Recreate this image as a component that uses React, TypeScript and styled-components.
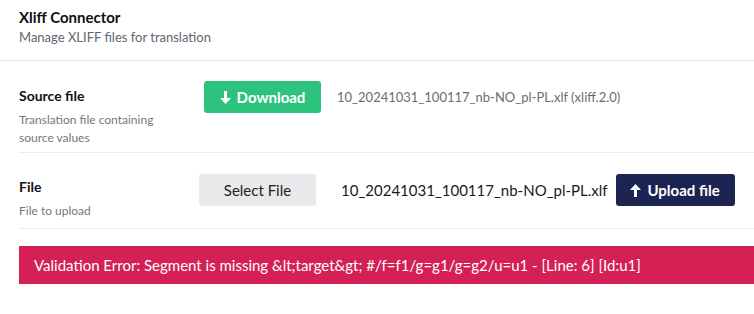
import React from "react";
import styled, { createGlobalStyle } from "styled-components";

const Global = createGlobalStyle`
  html, body { margin: 0; padding: 0; background: #fff; }
  body { font-family: Lato, "Open Sans", sans-serif; color: #1a1a1a; }
  * { box-sizing: border-box; }
`;

const Page = styled.div`
  width: 754px;
  overflow: hidden;
`;

const Header = styled.header`
  padding: 7px 19px 0 19px;
  height: 61px;
  border-bottom: 1px solid #e6e6e6;
`;

const Title = styled.h1`
  margin: 0;
  font-size: 15px;
  font-weight: 700;
  line-height: 20px;
  color: #111;
`;

const Subtitle = styled.p`
  margin: 1px 0 0;
  font-size: 13px;
  line-height: 18px;
  color: #5f6670;
`;

const Body = styled.div`
  padding-left: 19px;
`;

const Row = styled.div<{ $height: number; $pt: number }>`
  display: grid;
  grid-template-columns: 180px 1fr;
  height: ${(p) => p.$height}px;
  padding-top: ${(p) => p.$pt}px;
  border-bottom: 1px solid #ececec;
`;

const LabelCol = styled.div<{ $offset: number }>`
  display: flex;
  flex-direction: column;
  padding-top: ${(p) => p.$offset}px;
`;

const Label = styled.div`
  font-size: 14px;
  font-weight: 700;
  line-height: 20px;
  color: #111;
`;

const Hint = styled.div`
  margin-top: 5px;
  font-size: 12px;
  line-height: 18px;
  color: #777;
`;

const Controls = styled.div<{ $gap: number; $indent?: number }>`
  display: flex;
  align-items: center;
  gap: ${(p) => p.$gap}px;
  height: 32px;
  align-self: start;
  padding-left: ${(p) => p.$indent ?? 0}px;
`;

const Button = styled.button<{ $bg: string; $fg: string; $w: number; $bold?: boolean }>`
  display: inline-flex;
  align-items: center;
  justify-content: center;
  gap: 6px;
  width: ${(p) => p.$w}px;
  height: 32px;
  border: none;
  border-radius: 3px;
  background: ${(p) => p.$bg};
  color: ${(p) => p.$fg};
  font-family: Lato, sans-serif;
  font-size: 15px;
  font-weight: ${(p) => (p.$bold ? 700 : 400)};
  padding: 0;
  cursor: pointer;
`;

const PushedButton = styled(Button)`
  margin-left: -17px;
`;

const FileName = styled.span<{ $muted?: boolean }>`
  font-size: ${(p) => (p.$muted ? 13 : 15)}px;
  color: ${(p) => (p.$muted ? "#6d6d6d" : "#1a1a1a")};
  white-space: nowrap;
`;

const Banner = styled.div`
  margin-top: 17px;
  height: 38px;
  background: #d42054;
  color: #fff;
  font-size: 15px;
  display: flex;
  align-items: center;
  padding-left: 15px;
  white-space: nowrap;
`;

const Arrow = ({ up }: { up?: boolean }) => (
  <svg width="11" height="13" viewBox="0 0 11 13" style={{ transform: up ? "rotate(180deg)" : undefined }}>
    <path d="M4 0h3v7h4l-5.5 6L0 7h4z" fill="currentColor" />
  </svg>
);

export default function App() {
  return (
    <Page>
      <Global />
      <Header>
        <Title>Xliff Connector</Title>
        <Subtitle>Manage XLIFF files for translation</Subtitle>
      </Header>
      <Body>
        <Row $height={92} $pt={20}>
          <LabelCol $offset={5}>
            <Label>Source file</Label>
            <Hint>
              Translation file containing
              <br />
              source values
            </Hint>
          </LabelCol>
          <Controls $gap={16} $indent={5}>
            <Button $bg="#2dc37e" $fg="#fff" $w={117} $bold>
              <Arrow /> Download
            </Button>
            <FileName $muted>10_20241031_100117_nb-NO_pl-PL.xlf (xliff.2.0)</FileName>
          </Controls>
        </Row>
        <Row $height={76} $pt={21}>
          <LabelCol $offset={3}>
            <Label>File</Label>
            <Hint>File to upload</Hint>
          </LabelCol>
          <Controls $gap={25}>
            <Button $bg="#e9e9eb" $fg="#222" $w={117}>
              Select File
            </Button>
            <FileName>10_20241031_100117_nb-NO_pl-PL.xlf</FileName>
            <PushedButton $bg="#1c2551" $fg="#fff" $w={119} $bold>
              <Arrow up /> Upload file
            </PushedButton>
          </Controls>
        </Row>
        <Banner>
          Validation Error: Segment is missing &amp;lt;target&amp;gt; #/f=f1/g=g1/g=g2/u=u1 - [Line: 6] [Id:u1]
        </Banner>
      </Body>
    </Page>
  );
}
